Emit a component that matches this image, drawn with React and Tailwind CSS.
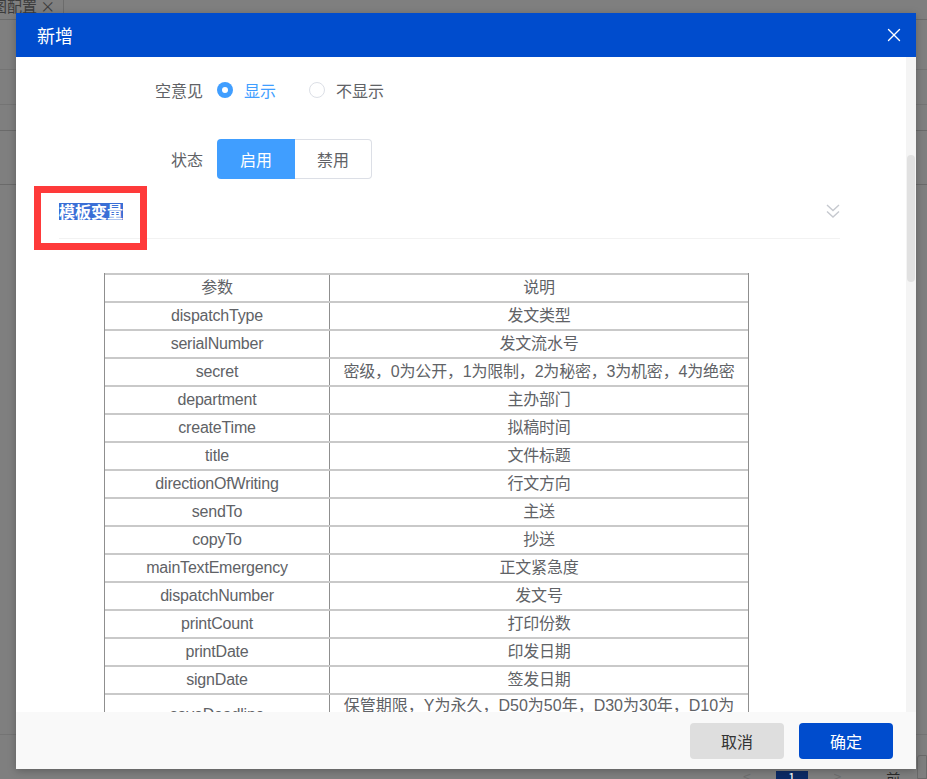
import React from "react";
import { X } from "lucide-react";

const rows = [
  ["dispatchType", "发文类型"],
  ["serialNumber", "发文流水号"],
  ["secret", "密级，0为公开，1为限制，2为秘密，3为机密，4为绝密"],
  ["department", "主办部门"],
  ["createTime", "拟稿时间"],
  ["title", "文件标题"],
  ["directionOfWriting", "行文方向"],
  ["sendTo", "主送"],
  ["copyTo", "抄送"],
  ["mainTextEmergency", "正文紧急度"],
  ["dispatchNumber", "发文号"],
  ["printCount", "打印份数"],
  ["printDate", "印发日期"],
  ["signDate", "签发日期"],
];

const font = { fontFamily: '"Liberation Sans", "Noto Sans CJK SC", sans-serif' };

const Row = ({ a, b }) => (
  <div className="flex h-[28px] border-t-2 border-[#c9c9c9]">
    <div className="w-[225px] border-r border-[#8f8f8f] flex items-center justify-center">{a}</div>
    <div className="flex-1 flex items-center justify-center">{b}</div>
  </div>
);

const Backdrop = () => (
  <div className="w-full h-full flex flex-col">
    <div className="h-[20px] border-b border-[#6c6c6c] flex items-start">
      <div className="h-[20px] w-[64px] border-r border-[#6c6c6c] overflow-hidden flex items-start">
        <span className="-mt-[5px] -ml-[8px] text-[15px] text-[#3c3c3c] whitespace-nowrap">图配置 ×</span>
      </div>
    </div>
    <div className="h-[50px] border-b border-[#747474]" />
    <div className="h-[35px] border-b border-[#747474]" />
    <div className="h-[26px] border-b border-[#6a6a6a]" />
    <div className="h-[54px] border-b border-[#6a6a6a]" />
    <div className="h-[550px] border-b border-[#747474]" />
    <div className="flex-1 flex items-end text-[#6e6e6e]">
      <span className="ml-[743px] w-[12px] h-[9px] leading-[12px] text-[14px] overflow-hidden">&lt;</span>
      <div className="ml-[21px] w-[33px] h-[8px] bg-[#0b2a66] text-white text-[13px] leading-[14px] text-center overflow-hidden">1</div>
      <span className="ml-[26px] w-[12px] h-[9px] leading-[12px] text-[14px] overflow-hidden">&gt;</span>
      <span className="ml-[41px] h-[8px] leading-[14px] text-[14px] overflow-hidden text-[#2a2a2a]">前往</span>
      <div className="ml-[4px] w-[10px] h-[24px] border border-[#6a6a6a] rounded-tl-[3px]" />
    </div>
  </div>
);

export default function App() {
  return (
    <div
      className="relative w-[927px] h-[779px] bg-[#7f7f7f] overflow-hidden"
      style={{ fontFamily: '"Noto Sans CJK SC", "Liberation Sans", sans-serif' }}
    >
      <Backdrop />

      <div className="absolute left-[16px] top-[13px] w-[900px] h-[756px] bg-white flex flex-col shadow-[0_2px_8px_rgba(0,0,0,0.25)]">
        <div className="h-[44px] bg-[#004ccd] flex items-center justify-between pl-[21px] pr-[11px]">
          <span className="text-white text-[18px]">新增</span>
          <X size={22} strokeWidth={1.5} className="text-white" />
        </div>

        <div className="flex h-[655px] overflow-hidden">
          <div className="flex-1 overflow-hidden text-[16px] text-[#606266]">
            <div className="pt-[13px] flex h-[53px] items-end">
              <div className="flex items-center h-[40px]">
                <div className="w-[201px] pr-[14px] text-right">空意见</div>
                <div className="flex items-center">
                  <span className="w-[16px] h-[16px] rounded-full bg-[#409eff] flex items-center justify-center">
                    <span className="w-[6px] h-[6px] rounded-full bg-white" />
                  </span>
                  <span className="ml-[11px] text-[#409eff]">显示</span>
                  <span className="ml-[33px] w-[16px] h-[16px] rounded-full border border-[#dcdfe6] bg-white" />
                  <span className="ml-[11px]">不显示</span>
                </div>
              </div>
            </div>

            <div className="mt-[29px] flex items-center h-[40px]">
              <div className="w-[201px] pr-[14px] text-right">状态</div>
              <div className="flex h-[40px]">
                <div className="w-[78px] bg-[#409eff] text-white rounded-l-[4px] flex items-center justify-center">启用</div>
                <div className="w-[77px] border border-l-0 border-[#dcdfe6] rounded-r-[4px] flex items-center justify-center">禁用</div>
              </div>
            </div>

            <div className="mt-[10px] ml-[43px] w-[781px] h-[50px] pb-[4px] flex items-center justify-between border-b border-[#f2f2f2]">
              <span className="bg-[#3a6fd6] text-white font-bold leading-[17px]">模板变量</span>
              <svg width="14" height="15" viewBox="0 0 14 15" fill="none" stroke="#c6c9cf" strokeWidth="1.4">
                <polyline points="1,1 7,6.5 13,1" />
                <polyline points="1,7.5 7,13 13,7.5" />
              </svg>
            </div>

            <div
              className="mt-[34px] ml-[88px] w-[645px] border-l border-r border-[#8f8f8f] text-[16px] tracking-[-0.2px]"
              style={font}
            >
              <Row a="参数" b="说明" />
              {rows.map(([a, b]) => (
                <Row key={a} a={a} b={b} />
              ))}
              <div className="flex border-t-2 border-[#c9c9c9]">
                <div className="w-[225px] border-r border-[#8f8f8f] flex items-center justify-center">saveDeadline</div>
                <div className="flex-1 text-center leading-[19px] py-[1px] px-[5px] tracking-normal">
                  保管期限，Y为永久，D50为50年，D30为30年，D10为10年，D5为5年
                </div>
              </div>
            </div>
          </div>

          <div className="w-[10px] bg-[#f4f4f4] flex flex-col pt-[98px]">
            <div className="ml-[1px] w-[8px] h-[127px] rounded-full bg-[#e1e1e1]" />
          </div>
        </div>

        <div className="flex-1 bg-[#f9f9f9] flex items-center justify-end pr-[23px] gap-[15px] text-[16px]">
          <button className="w-[94px] h-[36px] rounded-[4px] bg-[#dedede] text-[#333]">取消</button>
          <button className="w-[94px] h-[36px] rounded-[4px] bg-[#004ccd] text-white">确定</button>
        </div>
      </div>

      <div className="absolute left-[34px] top-[186px] w-[113px] h-[64px] border-[7px] border-[#fe3a3a]" />
    </div>
  );
}
